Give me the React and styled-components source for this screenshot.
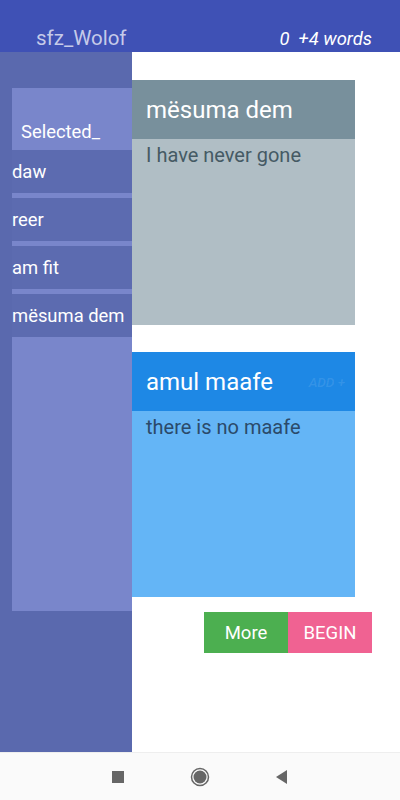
import React from "react"
import styled, { createGlobalStyle } from "styled-components"

const Global = createGlobalStyle`
	html, body {
		margin: 0;
		padding: 0;
		background: #fff;
	}
	body {
		font-family: Roboto, "Noto Sans", sans-serif;
	}
`

const Screen = styled.div`
	display: flex;
	flex-direction: column;
	width: 400px;
	height: 800px;
	overflow: hidden;
`

const Header = styled.header`
	display: flex;
	align-items: flex-end;
	justify-content: space-between;
	height: 52px;
	padding: 0 28px 0 36px;
	box-sizing: border-box;
	background: #3f51b5;
`

const Title = styled.span`
	font-size: 20.5px;
	line-height: 24px;
	padding-bottom: 2px;
	color: #c5cae9;
`

const Count = styled.span`
	font-size: 18.4px;
	font-style: italic;
	line-height: 24px;
	padding-bottom: 1px;
	color: #fff;
`

const Main = styled.div`
	display: flex;
	flex: 1;
	min-height: 0;
`

const Sidebar = styled.aside`
	display: flex;
	flex-direction: column;
	width: 132px;
	padding: 36px 0 0 12px;
	box-sizing: border-box;
	background: #5a69ae;
`

const Panel = styled.div`
	display: flex;
	align-items: flex-end;
	height: ${p => p.$h}px;
	padding: 0 0 8px 9px;
	box-sizing: border-box;
	background: #7986cb;
	color: #fff;
	font-size: 18.4px;
	flex-shrink: 0;
`

const Item = styled.div`
	display: flex;
	align-items: center;
	height: 43px;
	color: #fff;
	font-size: 18.4px;
	background: #5c6bb0;
	white-space: nowrap;
	flex-shrink: 0;
`

const Bar = styled.div`
	height: 5px;
	background: #7986cb;
	flex-shrink: 0;
`

const Content = styled.div`
	display: flex;
	flex-direction: column;
	flex: 1;
	padding: 28px 28px 0 0;
	gap: 27px;
`

const Card = styled.div`
	display: flex;
	flex-direction: column;
	width: 223px;
	height: 245px;
	background: ${p => p.$body};
`

const CardHead = styled.div`
	display: flex;
	align-items: center;
	justify-content: space-between;
	height: 59px;
	padding: 0 10px 0 14px;
	background: ${p => p.$bg};
`

const CardTitle = styled.span`
	font-size: 24px;
	color: #fff;
	padding-top: 1px;
`

const Add = styled.span`
	font-size: 13.5px;
	font-style: italic;
	font-weight: 500;
	color: rgba(255, 255, 255, 0.1);
`

const CardText = styled.p`
	margin: 0;
	padding: 4px 14px;
	font-size: 20px;
	color: ${p => p.$color};
`

const Buttons = styled.div`
	display: flex;
	justify-content: flex-end;
	margin-top: -12px;
`

const Btn = styled.button`
	width: 84px;
	height: 41px;
	border: 0;
	padding: 0;
	font-family: Roboto, sans-serif;
	font-size: 18.5px;
	color: #fff;
	background: ${p => p.$bg};
`

const Nav = styled.nav`
	display: flex;
	align-items: center;
	justify-content: center;
	gap: 66px;
	height: 48px;
	background: #fafafa;
	border-top: 1px solid #eee;
	box-sizing: border-box;
`

const Square = styled.div`
	width: 12px;
	height: 12px;
	background: #666;
`

export default function App() {
	return (
		<Screen>
			<Global />
			<Header>
				<Title>sfz_Wolof</Title>
				<Count>0&nbsp; +4 words</Count>
			</Header>
			<Main>
				<Sidebar>
					<Panel $h={62}>Selected_</Panel>
					<Item>daw</Item>
					<Bar />
					<Item>reer</Item>
					<Bar />
					<Item>am fit</Item>
					<Bar />
					<Item>mësuma dem</Item>
					<Panel $h={274} />
				</Sidebar>
				<Content>
					<Card $body="#b0bec5">
						<CardHead $bg="#78909c">
							<CardTitle>mësuma dem</CardTitle>
						</CardHead>
						<CardText $color="#455a64">I have never gone</CardText>
					</Card>
					<Card $body="#64b5f6">
						<CardHead $bg="#1e88e5">
							<CardTitle>amul maafe</CardTitle>
							<Add>ADD +</Add>
						</CardHead>
						<CardText $color="#2b4a6a">there is no maafe</CardText>
					</Card>
					<Buttons>
						<Btn $bg="#4caf50">More</Btn>
						<Btn $bg="#f06292">BEGIN</Btn>
					</Buttons>
				</Content>
			</Main>
			<Nav>
				<Square />
				<svg width="20" height="20" viewBox="0 0 20 20">
					<circle cx="10" cy="10" r="8.5" fill="none" stroke="#666" strokeWidth="1.5" />
					<circle cx="10" cy="10" r="6.5" fill="#666" />
				</svg>
				<svg width="12" height="14" viewBox="0 0 12 14">
					<polygon points="11,0 11,14 0,7" fill="#666" />
				</svg>
			</Nav>
		</Screen>
	)
}
